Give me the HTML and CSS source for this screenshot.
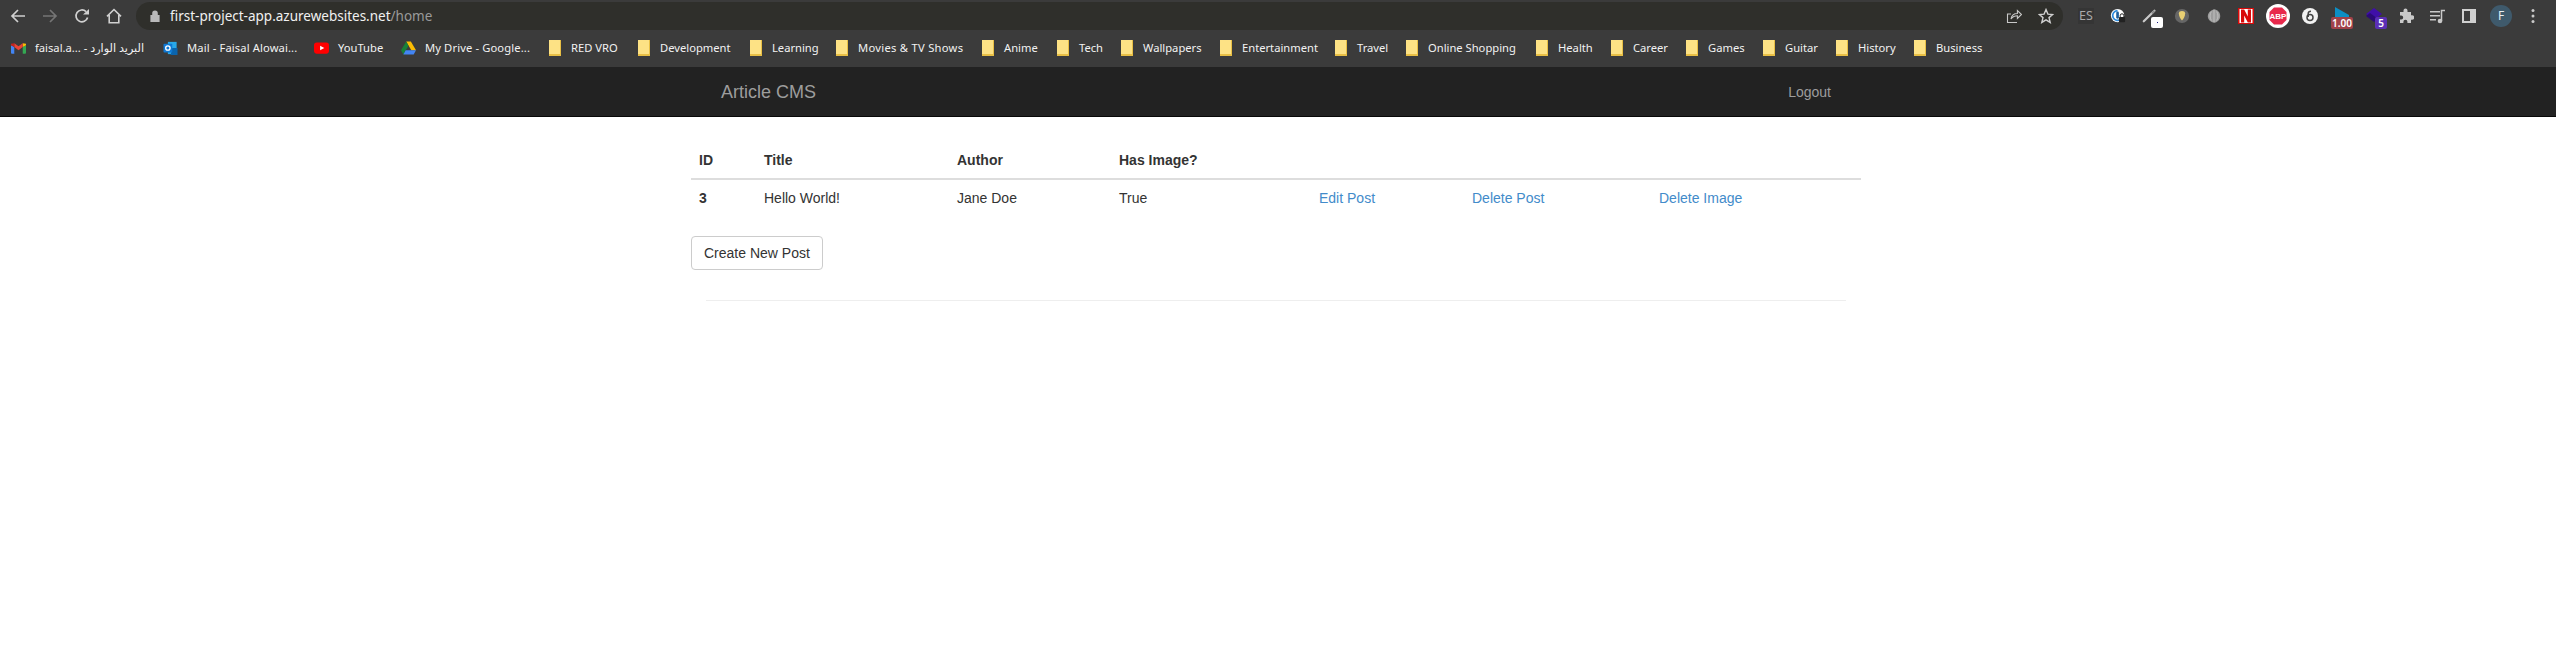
FILE: index.html
```html
<!DOCTYPE html>
<html lang="en">
<head>
<meta charset="utf-8">
<title>Article CMS</title>
<link rel="stylesheet" href="styles.css">
</head>
<body>
<header class="chrome">
  <div class="toolbar">
    <div class="nav-buttons">
      <svg class="nav-icon" viewBox="0 0 16 16"><path d="M15 8H2M8 2L2 8l6 6" fill="none" stroke="#d0d0d0" stroke-width="1.7"/></svg>
      <svg class="nav-icon" viewBox="0 0 16 16"><path d="M1 8h13M8 2l6 6-6 6" fill="none" stroke="#757575" stroke-width="1.7"/></svg>
      <svg class="nav-icon" viewBox="0 0 16 16"><path d="M13.6 9.5A5.9 5.9 0 1 1 12 3.6" fill="none" stroke="#d0d0d0" stroke-width="1.7"/><path d="M9 6.4h6V1z" fill="#d0d0d0"/></svg>
      <svg class="nav-icon home" viewBox="0 0 16 16"><path d="M1 8.4L8 1.5l7 6.9M3.2 7v7.8h9.6V7" fill="none" stroke="#d0d0d0" stroke-width="1.6"/></svg>
    </div>
    <div class="omnibox">
      <svg class="lock" viewBox="0 0 10 12"><path d="M2.2 5V3.4a2.8 2.8 0 0 1 5.6 0V5H9.6v7H.4V5z" fill="#b9b9b9"/></svg>
      <span class="url">first-project-app.azurewebsites.net<span class="url-path">/home</span></span>
      <span class="omni-actions">
        <svg class="omni-icon" viewBox="0 0 16 16"><path d="M11 14.500H1.500V6H5M5 11c.6-3.600 3-5.500 6.400-5.500V2.500L15.500 6.500l-4.100 4V7.800C8.500 7.800 6.600 8.800 5 11z" fill="none" stroke="#c8c8c8" stroke-width="1.100"/></svg>
        <svg class="omni-icon star" viewBox="0 0 16 16"><path d="M8 1.600l1.900 4.500 4.800.4-3.700 3.100 1.200 4.800L8 11.800l-4.200 2.600L5 9.600 1.300 6.500l4.800-.4z" fill="none" stroke="#d0d0d0" stroke-width="1.400"/></svg>
      </span>
    </div>
    <div class="extensions">
      <span class="ext ext-es">ES</span>
      <svg class="ext" viewBox="0 0 18 18"><circle cx="8.500" cy="8.500" r="7.500" fill="#fff"/><path d="M8.500 3a5.500 5.500 0 1 0 4 9.300" fill="none" stroke="#2e8bdc" stroke-width="2"/><rect x="7" y="4" width="3" height="8" rx="1.500" fill="#1e5f9c"/><rect x="10" y="10" width="7" height="6" rx="1" fill="#222"/><path d="M11.500 10V8.500a2 2 0 0 1 4 0V10" fill="none" stroke="#222" stroke-width="1.100"/></svg>
      <span class="ext ext-badged">
        <svg class="ext-svg" viewBox="0 0 18 18"><path d="M2 15L14 3" stroke="#c9c9c9" stroke-width="2.500" stroke-linecap="round"/><path d="M11 6l3-3" stroke="#8a8a8a" stroke-width="2"/></svg>
        <span class="badge-white"><span class="badge-dot"></span></span>
      </span>
      <svg class="ext" viewBox="0 0 18 18"><circle cx="9" cy="9" r="8" fill="#666"/><path d="M9 3.500c2 0 3.500.8 3.500 2.500 0 3.500-1.500 6-3.500 8-2-2-3.500-4.500-3.500-8 0-1.700 1.500-2.500 3.500-2.500z" fill="#e8cf73"/></svg>
      <svg class="ext" viewBox="0 0 18 18"><path d="M9 1.500C13 2 16 5 16 9s-3 7-6.500 7.500C5 16 2 13 2 9c0-3 2.500-6 7-7.500z" fill="#9d9d9d"/><path d="M9 2v14M6 4c-2 3-2 7 0 10M12 4c2 3 2 7 0 10" fill="none" stroke="#c4c4c4"/></svg>
      <svg class="ext" viewBox="0 0 16 16"><rect width="16" height="16" fill="#d80a0a"/><rect x="1.500" y="1" width="13" height="14" fill="#fff"/><path d="M3 1.500h3.200l3.600 7V1.500H13v13H9.800l-3.600-7v7H3z" fill="#d80a0a"/></svg>
      <svg class="ext ext-abp" viewBox="0 0 24 24"><circle cx="12" cy="12" r="12" fill="#fff"/><path d="M8 3.500h8l4.500 4.500v8L16 20.500H8L3.500 16V8z" fill="#e8294c"/><text x="12" y="15" class="abp-text">ABP</text></svg>
      <svg class="ext" viewBox="0 0 16 16"><circle cx="8" cy="8" r="8" fill="#f2f2f2"/><circle cx="8" cy="9.500" r="3" fill="none" stroke="#444" stroke-width="1.500"/><path d="M6.200 9V5.500C6.200 4 7 3.300 9 3.300" fill="none" stroke="#444" stroke-width="1.500"/></svg>
      <span class="ext ext-badged ext-wide">
        <svg class="tri" viewBox="0 0 14 10"><path d="M0 0l14 8v2H0z" fill="#0d8ec4"/></svg>
        <span class="badge badge-red">1.00</span>
      </span>
      <span class="ext ext-badged">
        <svg class="ext-svg" viewBox="0 0 16 16"><path d="M8 0l8 6-8 6-8-6z" fill="#3f0fa8"/><path d="M0 8l8 6 4-3-8-6z" fill="#2b0a78"/></svg>
        <span class="badge badge-purple">5</span>
      </span>
      <svg class="ext" viewBox="0 0 16 16"><path d="M5.500 2.500a2 2 0 0 1 4 0V4H13v3.300h1a2.200 2.200 0 0 1 0 4.400h-1V15H9.400v-1.200a2 2 0 0 0-4 0V15H2v-3.500h1.200a2 2 0 0 0 0-4H2V4h3.500z" fill="#c9c9c9"/></svg>
      <svg class="ext" viewBox="0 0 16 16"><path d="M0 3h10v1.500H0zM0 7h10v1.500H0zM0 11h6v1.500H0z" fill="#c9c9c9"/><path d="M11.500 13V2.500H15" fill="none" stroke="#c9c9c9" stroke-width="1.500"/><circle cx="10" cy="13" r="2.300" fill="#c9c9c9"/></svg>
      <svg class="ext ext-side" viewBox="0 0 14 14"><path d="M0 0h14v14H0z" fill="#d0d0d0"/><path d="M2 2h6v10H2z" fill="#3c3c3c"/></svg>
      <span class="avatar">F</span>
      <svg class="ext-menu" viewBox="0 0 4 16"><circle cx="2" cy="2.500" r="1.500" fill="#c9c9c9"/><circle cx="2" cy="8" r="1.500" fill="#c9c9c9"/><circle cx="2" cy="13.500" r="1.500" fill="#c9c9c9"/></svg>
    </div>
  </div>
  <nav class="bookmarks">
    <a class="bm"><svg class="bm-icon" viewBox="0 0 16 12"><path d="M0 3v8a1 1 0 0 0 1 1h2.500V5z" fill="#4285f4"/><path d="M16 3v8a1 1 0 0 1-1 1h-2.500V5z" fill="#34a853"/><path d="M12.500 1L16 1.500V3l-3.500 2z" fill="#fbbc04"/><path d="M3.500 5L8 8.500 12.500 5V.8L8 4.200 3.500.8z" fill="#ea4335"/><path d="M0 3V1.500L3.500 1v4z" fill="#c5221f"/></svg><span>faisal.a... - البريد الوارد</span></a>
    <a class="bm bm-loose"><svg class="bm-icon" viewBox="0 0 16 16"><path d="M5 1h10v14H5z" fill="#28a8ea"/><path d="M10 8h6v8H8z" fill="#0a64ad"/><rect y="3" width="10" height="10" rx="1" fill="#0f78d4"/><circle cx="5" cy="8" r="2.500" fill="none" stroke="#fff" stroke-width="1.500"/></svg><span>Mail - Faisal Alowai...</span></a>
    <a class="bm"><svg class="bm-icon" viewBox="0 0 16 12"><rect width="16" height="12" rx="3" fill="#f00"/><path d="M6.500 3.500v5L11 6z" fill="#fff"/></svg><span>YouTube</span></a>
    <a class="bm bm-loose"><svg class="bm-icon" viewBox="0 0 16 14"><path d="M5.500 0h5L16 9.500h-5z" fill="#fbbc04"/><path d="M5.500 0L0 9.500 2.500 14 8 4.500z" fill="#188038"/><path d="M2.500 14h11l2.500-4.500H5z" fill="#4285f4"/></svg><span>My Drive - Google...</span></a>
    <a class="bm"><span class="folder"></span><span>RED VRO</span></a>
    <a class="bm"><span class="folder"></span><span>Development</span></a>
    <a class="bm"><span class="folder"></span><span>Learning</span></a>
    <a class="bm bm-loose-2"><span class="folder"></span><span>Movies &amp; TV Shows</span></a>
    <a class="bm"><span class="folder"></span><span>Anime</span></a>
    <a class="bm"><span class="folder"></span><span>Tech</span></a>
    <a class="bm"><span class="folder"></span><span>Wallpapers</span></a>
    <a class="bm"><span class="folder"></span><span>Entertainment</span></a>
    <a class="bm"><span class="folder"></span><span>Travel</span></a>
    <a class="bm"><span class="folder"></span><span>Online Shopping</span></a>
    <a class="bm"><span class="folder"></span><span>Health</span></a>
    <a class="bm"><span class="folder"></span><span>Career</span></a>
    <a class="bm"><span class="folder"></span><span>Games</span></a>
    <a class="bm"><span class="folder"></span><span>Guitar</span></a>
    <a class="bm"><span class="folder"></span><span>History</span></a>
    <a class="bm"><span class="folder"></span><span>Business</span></a>
  </nav>
</header>
<div class="navbar">
  <div class="container navbar-inner">
    <a class="brand">Article CMS</a>
    <a class="logout">Logout</a>
  </div>
</div>
<main class="container content">
  <table class="posts">
    <colgroup>
      <col class="c-id"><col class="c-title"><col class="c-author"><col class="c-image">
      <col class="c-edit"><col class="c-del"><col class="c-delimg">
    </colgroup>
    <thead>
      <tr><th>ID</th><th>Title</th><th>Author</th><th>Has Image?</th><th></th><th></th><th></th></tr>
    </thead>
    <tbody>
      <tr>
        <th>3</th><td>Hello World!</td><td>Jane Doe</td><td>True</td>
        <td><a class="link">Edit Post</a></td><td><a class="link">Delete Post</a></td><td><a class="link">Delete Image</a></td>
      </tr>
    </tbody>
  </table>
  <a class="btn">Create New Post</a>
  <hr class="rule">
</main>
</body>
</html>
```

FILE: styles.css
```css
* { box-sizing: border-box; }
html, body { margin: 0; padding: 0; }
body {
  width: 2556px;
  height: 663px;
  overflow: hidden;
  background: #fff;
  font-family: "Liberation Sans", Arial, sans-serif;
  font-size: 14px;
  line-height: 20px;
  color: #333;
}

/* browser chrome */
.chrome { background: #3b3b3b; height: 67px; font-family: "Noto Sans", "DejaVu Sans", sans-serif; }
.toolbar { display: flex; align-items: flex-start; height: 33px; padding-top: 2px; }
.nav-buttons { display: flex; width: 136px; padding: 6px 0 0 10px; gap: 16px; }
.nav-icon { width: 16px; height: 16px; display: block; }
.omnibox {
  width: 1927px;
  height: 28px;
  border-radius: 14px;
  background: #2f2f2b;
  display: flex;
  align-items: center;
  padding-left: 14px;
  color: #f1f1f1;
}
.lock { width: 10px; height: 12px; display: block; flex: none; }
.url { margin-left: 10px; font-size: 13.5px; white-space: nowrap; }
.url-path { color: #9a9a9a; }
.omni-actions { margin-left: auto; display: flex; gap: 16px; padding-right: 9px; }
.omni-icon { width: 16px; height: 16px; display: block; }
.extensions { display: flex; align-items: center; height: 28px; margin-left: 15px; gap: 16px; }
.ext { width: 16px; height: 16px; display: block; flex: none; }
.ext-es {
  font-size: 12.5px; line-height: 16px; text-align: center; color: #aaa; background: #353535;
}
.ext-badged { position: relative; }
.ext-svg { width: 16px; height: 16px; display: block; }
.badge-white {
  position: absolute; left: 9px; top: 9px; width: 12px; height: 11px; border-radius: 2px; background: #fff;
  display: flex; align-items: center; justify-content: center;
}
.badge-dot { width: 1px; height: 1px; background: #1b1b8a; }
.badge {
  position: absolute; top: 9px; height: 12px; border-radius: 2px; color: #fff;
  font-size: 10px; line-height: 12px; text-align: center; font-weight: 600;
}
.badge-red { left: -3px; width: 22px; background: #a1424a; }
.badge-purple { left: 9px; width: 12px; background: #5b2fb5; }
.tri { position: absolute; left: 1px; top: -1px; width: 14px; height: 10px; display: block; }
.ext-abp { width: 24px; height: 24px; margin: 0 -4px; }
.abp-text { font-family: "Liberation Sans", sans-serif; font-size: 8px; font-weight: 700; fill: #fff; text-anchor: middle; }
.ext-side { width: 14px; height: 14px; }
.avatar {
  width: 22px; height: 22px; border-radius: 50%; background: #3f5a6c; color: #e8eef2;
  font-size: 12px; line-height: 22px; text-align: center; flex: none; margin-left: -2px;
}
.ext-menu { width: 4px; height: 16px; display: block; margin-left: 3px; }

.bookmarks {
  display: grid;
  grid-template-columns: 152px 151px 87px 148px 89px 112px 86px 146px 75px 64px 99px 115px 71px 130px 75px 75px 77px 73px 78px auto;
  align-items: center;
  justify-content: start;
  height: 30px;
  padding-left: 11px;
  font-size: 11.2px;
  color: #f2f2f2;
  white-space: nowrap;
}
.bm { display: flex; align-items: center; gap: 9px; }
.bm-loose { letter-spacing: .12px; }
.bm-loose-2 { letter-spacing: .28px; }
.bm-icon { width: 15px; height: 14px; display: block; flex: none; }
.folder {
  display: block; width: 12px; height: 16px; margin-right: 1px; flex: none;
  background: #fde285; border-bottom: 2px solid #e8bf45; border-right: 1px solid #e8bf45;
}

/* app navbar */
.container { width: 1170px; margin-left: 691px; }
.navbar { height: 50px; background: #222; border-bottom: 1px solid #080808; }
.navbar-inner { display: flex; justify-content: space-between; align-items: center; height: 49px; padding: 0 30px; color: #9d9d9d; }
.brand { font-size: 18px; }
.logout { font-size: 14px; }

/* content */
.content { padding-top: 25px; }
.posts { width: 1170px; table-layout: fixed; border-collapse: collapse; margin-bottom: 20px; }
.c-id { width: 65px; }
.c-title { width: 193px; }
.c-author { width: 162px; }
.c-image { width: 200px; }
.c-edit { width: 153px; }
.c-del { width: 187px; }
.c-delimg { width: 210px; }
.posts th, .posts td { padding: 8px; text-align: left; vertical-align: top; }
.posts thead th { border-bottom: 2px solid #ddd; }
.link { color: #428bca; }
.btn {
  display: inline-block; padding: 6px 12px; border: 1px solid #ccc; border-radius: 4px;
  background: #fff; color: #333;
}
.rule { margin: 30px 15px 0; border: 0; border-top: 1px solid #eee; }
```
